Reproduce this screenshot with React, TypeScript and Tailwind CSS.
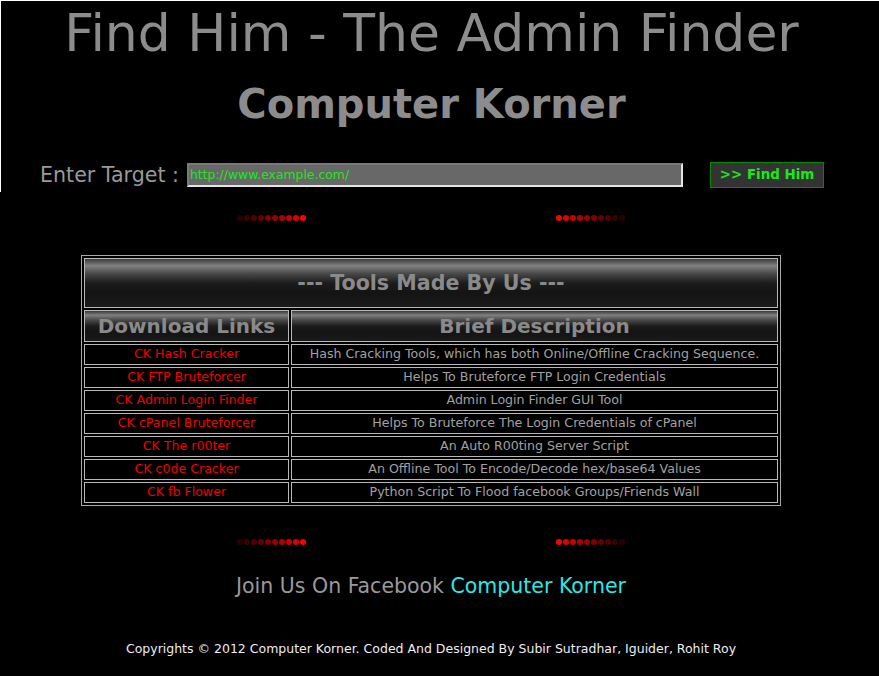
import React from "react";

const tools = [
  ["CK Hash Cracker", "Hash Cracking Tools, which has both Online/Offline Cracking Sequence."],
  ["CK FTP Bruteforcer", "Helps To Bruteforce FTP Login Credentials"],
  ["CK Admin Login Finder", "Admin Login Finder GUI Tool"],
  ["CK cPanel Bruteforcer", "Helps To Bruteforce The Login Credentials of cPanel"],
  ["CK The r00ter", "An Auto R00ting Server Script"],
  ["CK c0de Cracker", "An Offline Tool To Encode/Decode hex/base64 Values"],
  ["CK fb Flower", "Python Script To Flood facebook Groups/Friends Wall"],
];

const reds = ["#2a0000", "#3a0000", "#500000", "#650000", "#800000", "#990000", "#b00000", "#c80000", "#e00000", "#ff0000"];

const Dots = ({ reverse }: { reverse?: boolean }) => {
  const list = reverse ? [...reds].reverse() : reds;
  return (
    <div className="flex gap-[1px]">
      {list.map((c, i) => (
        <span key={i} className="block w-[6px] h-[6px] rounded-full" style={{ backgroundColor: c }} />
      ))}
    </div>
  );
};

const DotsRow = () => (
  <div className="flex justify-center gap-[250px]">
    <Dots />
    <Dots reverse />
  </div>
);

const gloss =
  "bg-[linear-gradient(to_bottom,#3a3a3a_0%,#808080_14%,#4a4a4a_30%,#1c1c1c_50%,#141414_70%,#1a1a1a_100%)]";

const App = () => {
  return (
    <div className="min-h-[676px] bg-black font-['DejaVu_Sans',sans-serif]">
      {/* header block */}
      <div className="h-[192px] border-t border-l border-white pr-[17px]">
        <h1 className="mt-[3px] text-center text-[52px] leading-[58px] text-[#8c8c8c]">
          Find Him - The Admin Finder
        </h1>
        <h2 className="mt-[19px] text-center text-[40px] leading-[47px] font-bold text-[#8c8c8c]">
          Computer Korner
        </h2>
        <div className="mt-[34px] flex items-center pl-[39px]">
          <span className="w-[147px] text-[20.6px] leading-[24px] text-[#999]">Enter Target :</span>
          <div className="w-[496px] h-[24px] border-2 border-t-[#7a7a7a] border-l-[#7a7a7a] border-b-[#e4e4e4] border-r-[#e4e4e4] bg-[#686868] flex items-center pl-[1px] text-[12.4px] text-[#22e522]">
            http://www.example.com/
          </div>
          <button className="ml-[27px] w-[114px] h-[26px] border border-[#008a00] bg-[#333] text-[13.4px] font-bold text-[#11ee11]">
            &gt;&gt; Find Him
          </button>
        </div>
      </div>

      <div className="pr-[17px]">
        <div className="mt-[23px]">
          <DotsRow />
        </div>

        {/* tools table */}
        <div className="mt-[34px] flex justify-center">
          <div className="w-[700px] border border-[#a8a8a8] p-[2px] grid grid-cols-[205px_487px] gap-[2px]">
            <div className={`col-span-2 h-[50px] border border-[#b8b8b8] ${gloss} flex items-center justify-center text-[20.6px] font-bold text-[#8a8a8a]`}>
              --- Tools Made By Us ---
            </div>
            <div className={`h-[32px] border border-[#b8b8b8] ${gloss} flex items-center justify-center text-[20px] font-bold text-[#8a8a8a]`}>
              Download Links
            </div>
            <div className={`h-[32px] border border-[#b8b8b8] ${gloss} flex items-center justify-center text-[20px] font-bold text-[#8a8a8a]`}>
              Brief Description
            </div>
            {tools.map(([name, desc]) => (
              <React.Fragment key={name}>
                <div className="h-[21px] border border-[#b8b8b8] flex items-center justify-center text-[12.6px] text-[#ee0000]">
                  {name}
                </div>
                <div className="h-[21px] border border-[#b8b8b8] flex items-center justify-center text-[12.6px] text-[#a0a0a0]">
                  {desc}
                </div>
              </React.Fragment>
            ))}
          </div>
        </div>

        <div className="mt-[33px]">
          <DotsRow />
        </div>

        <p className="mt-[29px] text-center text-[20.5px] leading-[24px] text-[#999]">
          Join Us On Facebook <span className="text-[#2ee6e6]">Computer Korner</span>
        </p>

        <p className="mt-[43px] text-center text-[12.5px] leading-[16px] text-[#eee]">
          Copyrights © 2012 Computer Korner. Coded And Designed By Subir Sutradhar, Iguider, Rohit Roy
        </p>
      </div>
    </div>
  );
};

export default App;
